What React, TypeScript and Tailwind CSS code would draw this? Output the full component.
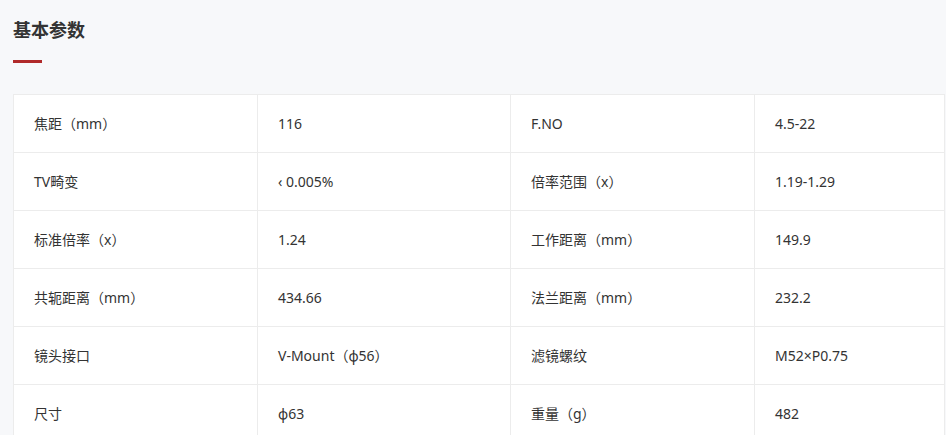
const rows: [string, string, string, string][] = [
  ["焦距（mm）", "116", "F.NO", "4.5-22"],
  ["TV畸变", "‹ 0.005%", "倍率范围（x）", "1.19-1.29"],
  ["标准倍率（x）", "1.24", "工作距离（mm）", "149.9"],
  ["共轭距离（mm）", "434.66", "法兰距离（mm）", "232.2"],
  ["镜头接口", "V-Mount（φ56）", "滤镜螺纹", "M52×P0.75"],
  ["尺寸", "φ63", "重量（g）", "482"],
];

export default function App() {
  return (
    <div
      className="min-h-screen bg-[#f7f8fa] pl-[13px] pt-[14px] text-[#333]"
      style={{ fontFamily: '"Noto Sans", "Noto Sans CJK SC", sans-serif' }}
    >
      <h2
        className="text-[18px] leading-[30px] font-bold text-[#333]"
        style={{ fontFamily: '"Noto Sans CJK SC", sans-serif' }}
      >
        基本参数
      </h2>
      <div className="mt-[16px] h-[3px] w-[29px] bg-[#b02a2a]" />
      <div className="mt-[31px] w-[932px] border-t border-l border-r border-[#ececec] bg-white">
        {rows.map((r, i) => (
          <div
            key={i}
            className="grid h-[58px] grid-cols-[244px_253px_244px_1fr] border-b border-[#ececec] text-[14px]"
          >
            {r.map((c, j) => (
              <div
                key={j}
                className={`flex items-center pl-[20px] pb-[1px] ${j < 3 ? "border-r border-[#ececec]" : ""}`}
              >
                {c}
              </div>
            ))}
          </div>
        ))}
      </div>
    </div>
  );
}
